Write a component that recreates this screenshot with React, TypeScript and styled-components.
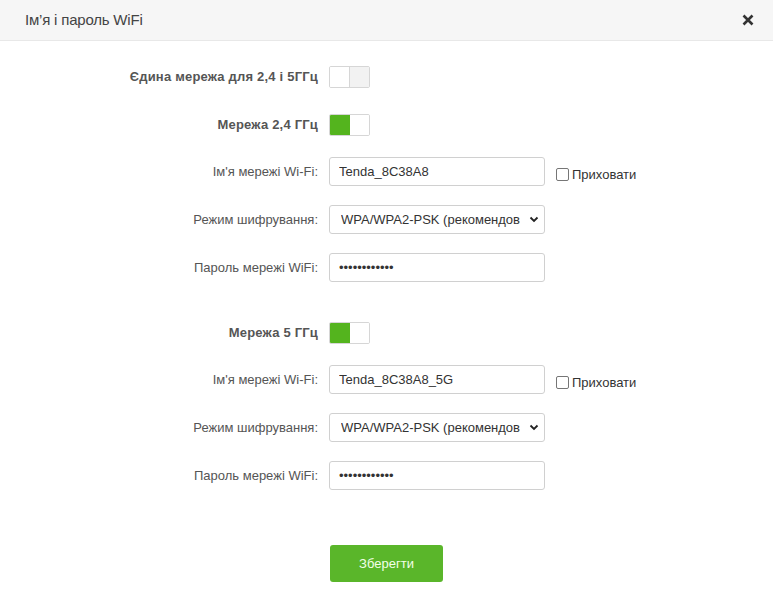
import React from "react";
import styled, { createGlobalStyle } from "styled-components";

const Global = createGlobalStyle`
  html, body { margin: 0; padding: 0; background: #fff; }
  body { font-family: "Liberation Sans", Arial, sans-serif; }
`;

const Page = styled.div`
  width: 773px;
  min-height: 600px;
  background: #fff;
`;

const Header = styled.div`
  height: 41px;
  background: #f6f6f6;
  border-bottom: 1px solid #e8e8e8;
  display: flex;
  align-items: center;
  justify-content: space-between;
  padding: 0 18px 2px 25px;
  box-sizing: border-box;
`;

const Title = styled.div`
  font-size: 15px;
  color: #444;
  letter-spacing: -0.2px;
`;

const Close = styled.div`
  width: 14px;
  height: 14px;
  display: flex;
  align-items: center;
  justify-content: center;
  margin-top: 2px;
`;

const Body = styled.div`
  display: flex;
  flex-direction: column;
  padding-top: 21px;
`;

const Section = styled.div<{ $gap?: number }>`
  display: flex;
  flex-direction: column;
  gap: 19px;
  margin-top: ${(p) => p.$gap ?? 0}px;
`;

const Row = styled.div<{ $tight?: boolean }>`
  display: flex;
  align-items: center;
  height: 29px;
  margin-bottom: ${(p) => (p.$tight ? -1 : 0)}px;
`;

const Label = styled.div<{ $bold?: boolean }>`
  width: 318px;
  text-align: right;
  margin-right: 11px;
  font-size: 13px;
  color: #555;
  font-weight: ${(p) => (p.$bold ? 700 : 400)};
  letter-spacing: ${(p) => (p.$bold ? "0.2px" : "0")};
`;

const ToggleBox = styled.div`
  width: 41px;
  height: 22px;
  box-sizing: border-box;
  border: 1px solid #d6d6d6;
  border-radius: 2px;
  display: flex;
  overflow: hidden;
`;

const ToggleHalf = styled.div<{ $color: string; $divider?: boolean }>`
  flex: 1;
  background: ${(p) => p.$color};
  border-right: ${(p) => (p.$divider ? "1px solid #d6d6d6" : "none")};
`;

const Toggle = ({ on }: { on: boolean }) => (
  <ToggleBox>
    {on ? (
      <>
        <ToggleHalf $color="#54b41e" />
        <ToggleHalf $color="#fff" />
      </>
    ) : (
      <>
        <ToggleHalf $color="#fff" $divider />
        <ToggleHalf $color="#f2f2f2" />
      </>
    )}
  </ToggleBox>
);

const TextInput = styled.input`
  width: 216px;
  height: 29px;
  box-sizing: border-box;
  border: 1px solid #d0d0d0;
  border-radius: 3px;
  padding: 0 9px;
  font-family: "Liberation Sans", Arial, sans-serif;
  font-size: 13px;
  color: #333;
  outline: none;
`;

const SelectWrap = styled.div`
  position: relative;
  width: 216px;
  height: 29px;
`;

const Select = styled.select`
  appearance: none;
  -webkit-appearance: none;
  width: 216px;
  height: 29px;
  box-sizing: border-box;
  border: 1px solid #d0d0d0;
  border-radius: 3px;
  padding: 0 24px 0 11px;
  font-family: "Liberation Sans", Arial, sans-serif;
  font-size: 13px;
  color: #333;
  background: #fff;
  outline: none;
`;

const Chevron = styled.svg`
  position: absolute;
  right: 6px;
  top: 11px;
  pointer-events: none;
`;

const CheckLabel = styled.label`
  display: flex;
  align-items: center;
  margin-left: 11px;
  margin-top: 6px;
  font-size: 13px;
  line-height: 15px;
  color: #333;
  gap: 3px;
`;

const CheckBox = styled.span`
  width: 11px;
  height: 11px;
  border: 1px solid #767676;
  border-radius: 2px;
  background: #fff;
  display: inline-block;
`;

const ButtonRow = styled.div`
  display: flex;
  padding-left: 330px;
  margin-top: 55px;
`;

const SaveButton = styled.button`
  width: 113px;
  height: 37px;
  background: #5ab62a;
  border: none;
  border-radius: 3px;
  color: #f2ffe8;
  font-family: "Liberation Sans", Arial, sans-serif;
  font-size: 13px;
`;

const EncryptSelect = () => (
  <SelectWrap>
    <Select defaultValue="wpa">
      <option value="wpa">WPA/WPA2-PSK (рекомендовано)</option>
    </Select>
    <Chevron width="10" height="7" viewBox="0 0 10 7">
      <path d="M1.5 1.5 L5 5 L8.5 1.5" fill="none" stroke="#222" strokeWidth="1.8" />
    </Chevron>
  </SelectWrap>
);

const Band = ({ title, ssid }: { title: string; ssid: string }) => (
  <>
    <Row $tight>
      <Label $bold>{title}</Label>
      <Toggle on />
    </Row>
    <Row>
      <Label>Ім'я мережі Wi-Fi:</Label>
      <TextInput defaultValue={ssid} />
      <CheckLabel>
        <CheckBox />
        Приховати
      </CheckLabel>
    </Row>
    <Row>
      <Label>Режим шифрування:</Label>
      <EncryptSelect />
    </Row>
    <Row>
      <Label>Пароль мережі WiFi:</Label>
      <TextInput type="password" defaultValue="123456789012" />
    </Row>
  </>
);

export default function App() {
  return (
    <Page>
      <Global />
      <Header>
        <Title>Ім’я і пароль WiFi</Title>
        <Close>
          <svg width="12" height="12" viewBox="0 0 12 12">
            <path d="M1.5 1.5 L10.5 10.5 M10.5 1.5 L1.5 10.5" stroke="#333" strokeWidth="2.6" />
          </svg>
        </Close>
      </Header>
      <Body>
        <Section>
          <Row>
            <Label $bold>Єдина мережа для 2,4 і 5ГГц</Label>
            <Toggle on={false} />
          </Row>
          <Band title="Мережа 2,4 ГГц" ssid="Tenda_8C38A8" />
        </Section>
        <Section $gap={36}>
          <Band title="Мережа 5 ГГц" ssid="Tenda_8C38A8_5G" />
        </Section>
        <ButtonRow>
          <SaveButton>Зберегти</SaveButton>
        </ButtonRow>
      </Body>
    </Page>
  );
}
